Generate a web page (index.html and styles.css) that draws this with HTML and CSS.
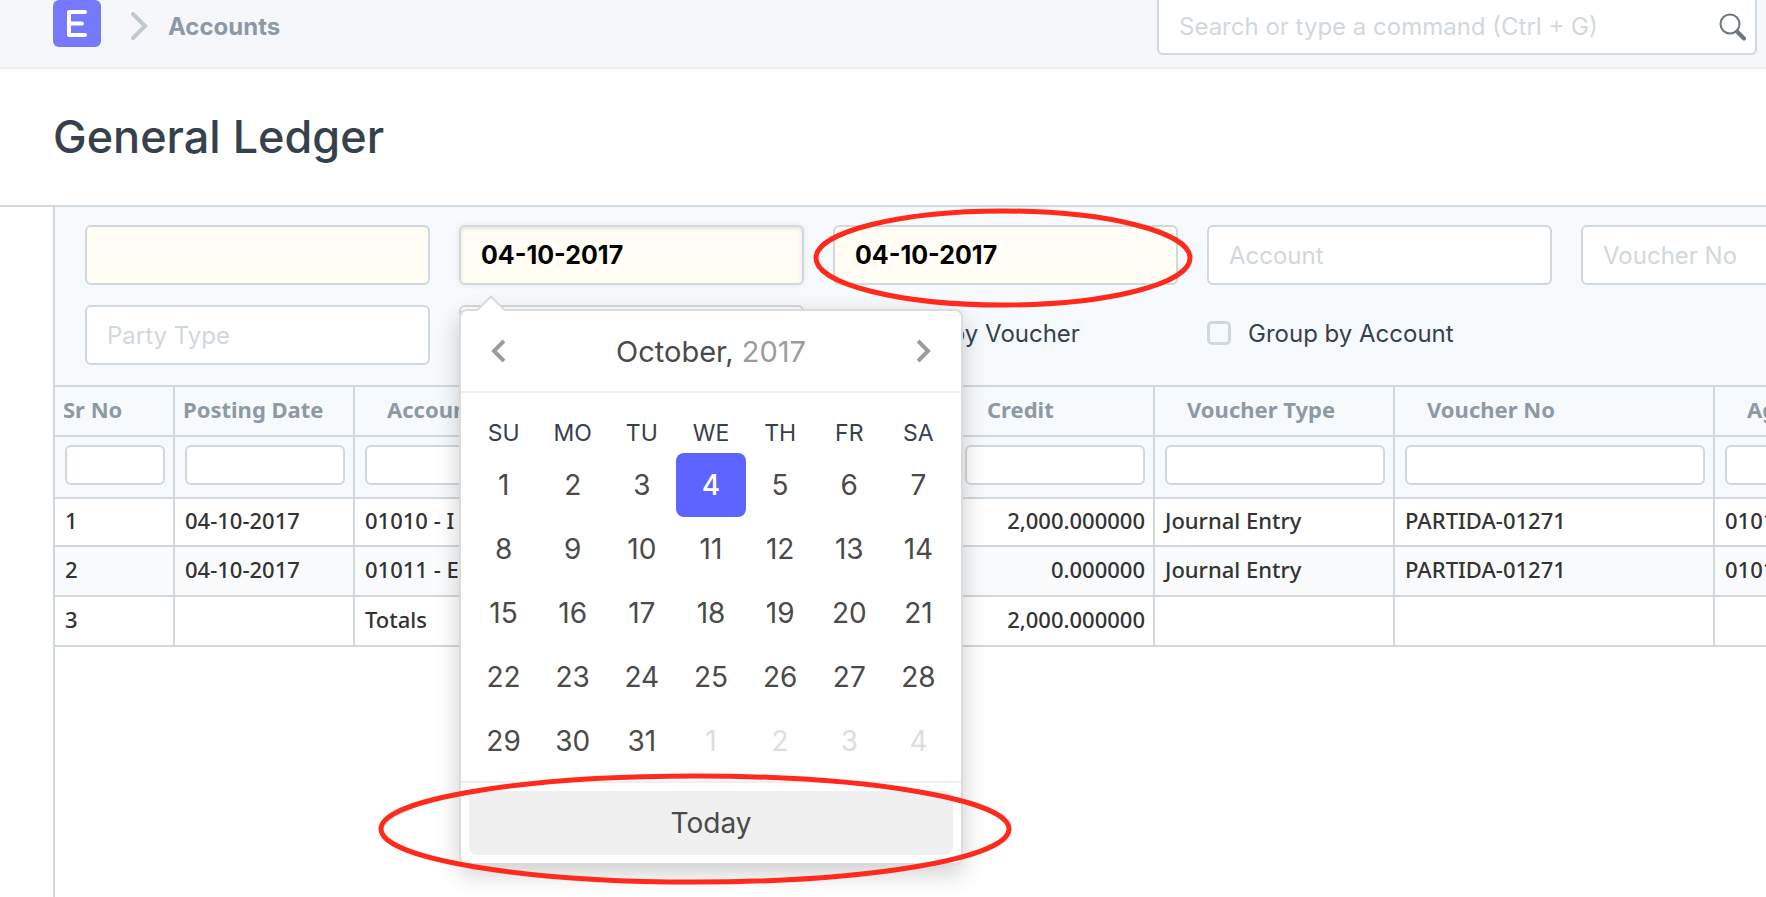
FILE: index.html
```
<!DOCTYPE html>
<html lang="en">
<head>
<meta charset="utf-8">
<title>General Ledger</title>
<link rel="stylesheet" href="styles.css">
</head>
<body>
<header class="navbar">
    <a class="logo" href="#" aria-label="Home">
        <svg width="20" height="27" viewBox="0 0 20 27"><path d="M18 2H2v23h16M2 13.500h13" fill="none" stroke="#fff" stroke-width="4" stroke-linecap="round" stroke-linejoin="round"/></svg>
    </a>
    <svg class="crumb-arrow" width="17" height="28" viewBox="0 0 17 28"><path d="M2 2l12 12L2 26" fill="none" stroke="#c0c9d0" stroke-width="4" stroke-linecap="round"/></svg>
    <a class="crumb" href="#">Accounts</a>
    <div class="search">
        <input type="text" class="search-input" aria-label="Search" placeholder="Search or type a command (Ctrl + G)">
        <svg class="search-icon" width="28" height="28" viewBox="0 0 28 28"><circle cx="11" cy="11" r="9.500" fill="none" stroke="#6c7680" stroke-width="2"/><path d="M18 18.500l7 7" stroke="#6c7680" stroke-width="4" stroke-linecap="round"/></svg>
    </div>
</header>

<div class="page-head">
    <h1>General Ledger</h1>
</div>

<main class="report">
    <div class="filters">
        <div class="filter"><input type="text" class="required" aria-label="Company"></div>
        <div class="filter">
            <input type="text" class="required active" aria-label="From Date" value="04-10-2017">
            <div class="datepicker">
                <svg class="pointer" width="30" height="17" viewBox="0 0 30 17"><path d="M1 15.500L15 1.500l14 14V17H1z" fill="#fff"/><path d="M1 15.500L15 1.500l14 14" fill="none" stroke="#dbdbdb" stroke-width="2"/></svg>
                <div class="dp-nav">
                    <button class="dp-arrow" aria-label="Previous month"><svg width="14" height="24" viewBox="0 0 14 24"><path d="M13 2L3 12l10 10" fill="none" stroke="#9c9c9c" stroke-width="4"/></svg></button>
                    <button class="dp-title">October, <span>2017</span></button>
                    <button class="dp-arrow" aria-label="Next month"><svg width="14" height="24" viewBox="0 0 14 24"><path d="M1 2l10 10L1 22" fill="none" stroke="#9c9c9c" stroke-width="4"/></svg></button>
                </div>
                <div class="dp-body">
                    <div class="dp-names">
                        <span>SU</span><span>MO</span><span>TU</span><span>WE</span><span>TH</span><span>FR</span><span>SA</span>
                    </div>
                    <div class="dp-days">
                        <button>1</button><button>2</button><button>3</button><button class="selected">4</button><button>5</button><button>6</button><button>7</button>
                        <button>8</button><button>9</button><button>10</button><button>11</button><button>12</button><button>13</button><button>14</button>
                        <button>15</button><button>16</button><button>17</button><button>18</button><button>19</button><button>20</button><button>21</button>
                        <button>22</button><button>23</button><button>24</button><button>25</button><button>26</button><button>27</button><button>28</button>
                        <button>29</button><button>30</button><button>31</button><button class="other">1</button><button class="other">2</button><button class="other">3</button><button class="other">4</button>
                    </div>
                </div>
                <div class="dp-footer">
                    <button class="today">Today</button>
                </div>
                <svg class="mark mark-today" width="634" height="112" viewBox="0 0 634 112"><ellipse cx="317" cy="56" rx="314" ry="53"/></svg>
            </div>
        </div>
        <div class="filter">
            <input type="text" class="required" aria-label="To Date" value="04-10-2017">
            <svg class="mark mark-date" width="380" height="100" viewBox="0 0 380 100"><ellipse cx="190" cy="50" rx="187" ry="47"/></svg>
        </div>
        <div class="filter"><input type="text" aria-label="Account" placeholder="Account"></div>
        <div class="filter"><input type="text" aria-label="Voucher No" placeholder="Voucher No"></div>
        <div class="filter"><input type="text" aria-label="Party Type" placeholder="Party Type"></div>
        <div class="filter"><input type="text" aria-label="Party"></div>
        <label class="check"><input type="checkbox">Group by Voucher</label>
        <label class="check"><input type="checkbox">Group by Account</label>
    </div>

    <table class="grid">
        <colgroup>
            <col class="col-sr"><col class="col-date"><col class="col-account"><col class="col-amount"><col class="col-amount"><col class="col-type"><col class="col-voucher"><col class="col-against">
        </colgroup>
        <thead>
            <tr class="titles">
                <th class="tight">Sr No</th><th class="tight">Posting Date</th><th>Account</th><th></th><th>Credit</th><th>Voucher Type</th><th>Voucher No</th><th>Against</th>
            </tr>
            <tr class="inline-filters">
                <td><input type="text" aria-label="Filter Sr No"></td>
                <td><input type="text" aria-label="Filter Posting Date"></td>
                <td><input type="text" aria-label="Filter Account"></td>
                <td><input type="text" aria-label="Filter Debit"></td>
                <td><input type="text" aria-label="Filter Credit"></td>
                <td><input type="text" aria-label="Filter Voucher Type"></td>
                <td><input type="text" aria-label="Filter Voucher No"></td>
                <td><input type="text" aria-label="Filter Against"></td>
            </tr>
        </thead>
        <tbody>
            <tr><td>1</td><td>04-10-2017</td><td>01010 - I</td><td></td><td class="number">2,000.000000</td><td>Journal Entry</td><td>PARTIDA-01271</td><td>01011</td></tr>
            <tr><td>2</td><td>04-10-2017</td><td>01011 - E</td><td></td><td class="number">0.000000</td><td>Journal Entry</td><td>PARTIDA-01271</td><td>01010</td></tr>
            <tr><td>3</td><td></td><td>Totals</td><td></td><td class="number">2,000.000000</td><td></td><td></td><td></td></tr>
        </tbody>
    </table>
</main>
</body>
</html>
```

FILE: styles.css
```
* {
  box-sizing: border-box;
}
body {
  margin: 0;
  min-height: 100vh;
  display: flex;
  flex-direction: column;
  font-family: Inter, sans-serif;
  font-size: 24px;
  color: #36414c;
  background: #fff;
}
input, button {
  font-family: inherit;
  font-size: inherit;
  color: inherit;
}
button {
  padding: 0;
  border: none;
  background: transparent;
  cursor: pointer;
}
input::placeholder {
  color: #d1d8dd;
  opacity: 1;
}

/* top bar */
.navbar {
  display: flex;
  align-items: flex-start;
  height: 69px;
  padding: 0 9px 0 53px;
  background: #f5f7fb;
  border-bottom: 2px solid #ebeff2;
}
.logo {
  display: flex;
  align-items: center;
  justify-content: center;
  width: 48px;
  height: 47px;
  border-radius: 6px;
  background: #7679fb;
}
.crumb-arrow {
  margin: 12px 20px 0 30px;
}
.crumb {
  line-height: 53px;
  font-size: 24px;
  font-weight: 700;
  color: #8d99a6;
  text-decoration: none;
}
.search {
  position: relative;
  width: 600px;
  margin-left: auto;
}
.search-input {
  display: block;
  width: 100%;
  height: 55px;
  padding: 0 60px 0 20px;
  border: 2px solid #d1d8dd;
  border-top: none;
  border-radius: 0 0 6px 6px;
  background: #fff;
}
.search-icon {
  position: absolute;
  right: 10px;
  top: 13px;
}

.page-head {
  display: flex;
  align-items: center;
  height: 138px;
  padding: 0 53px 2px;
  border-bottom: 2px solid #d1d8dd;
}
h1 {
  margin: 0;
  font-size: 45px;
  font-weight: 500;
}

/* report filters */
.report {
  flex: 1;
  margin-left: 53px;
  border-left: 2px solid #d1d8dd;
  overflow: hidden;
}
.filters {
  display: grid;
  grid-template-columns: repeat(5, 345px);
  gap: 20px 29px;
  padding: 18px 30px 20px;
  background: #f7fafc;
}
.filter {
  position: relative;
}
.filter input {
  display: block;
  width: 100%;
  height: 60px;
  padding: 0 20px;
  border: 2px solid #d1d8dd;
  border-radius: 6px;
  background: #fff;
}
.filter .required {
  background: #fffdf4;
  font-size: 25px;
  font-weight: 700;
  color: #000;
}
.filter .active {
  box-shadow: inset 0 2px 4px rgba(0, 0, 0, 0.1), 0 0 6px rgba(0, 0, 0, 0.08);
}
.check {
  display: flex;
  align-items: center;
  gap: 17px;
  height: 56px;
}
.check input {
  appearance: none;
  width: 24px;
  height: 24px;
  margin: 0;
  border: 3px solid #d1d8dd;
  border-radius: 5px;
}

/* date picker */
.datepicker {
  position: absolute;
  z-index: 2;
  top: 84px;
  left: 0;
  width: 504px;
  color: #4a4a4a;
  background: #fff;
  border: 2px solid #dbdbdb;
  border-radius: 8px;
  box-shadow: 0 8px 24px rgba(0, 0, 0, 0.2);
  font-size: 28px;
}
.pointer {
  position: absolute;
  top: -16px;
  left: 15px;
}
.dp-nav {
  display: flex;
  align-items: center;
  justify-content: space-between;
  height: 82px;
  padding: 0 7px;
  border-bottom: 2px solid #efefef;
}
.dp-arrow {
  display: flex;
  align-items: center;
  justify-content: center;
  width: 60px;
  height: 64px;
}
.dp-title {
  font-size: 29px;
}
.dp-title span {
  color: #9c9c9c;
}
.dp-body {
  padding: 16px 8px 8px;
}
.dp-names, .dp-days {
  display: grid;
  grid-template-columns: repeat(7, 1fr);
  text-align: center;
}
.dp-names {
  font-size: 23px;
  line-height: 48px;
  height: 44px;
  color: #36414c;
}
.dp-days {
  grid-auto-rows: 64px;
}
.dp-days button {
  border-radius: 8px;
}
.dp-days .selected {
  color: #fff;
  background: #5e64ff;
  font-weight: 500;
}
.dp-days .other {
  color: #dedede;
}
.dp-footer {
  padding: 8px;
  border-top: 2px solid #efefef;
}
.today {
  display: block;
  width: 100%;
  height: 64px;
  border-radius: 8px;
  background: #f0f0f0;
}

/* red marker rings */
.mark {
  position: absolute;
  z-index: 3;
  fill: none;
  stroke: #ff2a1c;
  stroke-width: 5px;
  pointer-events: none;
}
.mark-date {
  top: -17px;
  left: -20px;
}
.mark-today {
  bottom: -22px;
  left: -83px;
}

/* data grid */
.grid {
  table-layout: fixed;
  width: 1960px;
  border-collapse: separate;
  border-spacing: 0;
  font-family: "Trebuchet MS", "Noto Sans", sans-serif;
  font-size: 22px;
  font-weight: 500;
  color: #333;
}
.col-sr {
  width: 120px;
}
.col-date {
  width: 180px;
}
.col-account {
  width: 400px;
}
.col-amount {
  width: 200px;
}
.col-type {
  width: 240px;
}
.col-voucher {
  width: 320px;
}
.col-against {
  width: 300px;
}
.grid th, .grid td {
  padding: 0 8px 0 10px;
  border-right: 2px solid #d1d8dd;
  border-bottom: 2px solid #d1d8dd;
  text-align: left;
  white-space: nowrap;
}
.grid th {
  height: 52px;
  padding: 0 8px 4px 32px;
  border-top: 2px solid #d1d8dd;
  color: #8d99a6;
  background: #f7fafc;
}
.grid th.tight {
  padding-left: 8px;
}
.inline-filters td {
  height: 62px;
  padding-bottom: 4px;
  background: #f7fafc;
}
.inline-filters input {
  display: block;
  width: 100%;
  height: 40px;
  border: 2px solid #d1d8dd;
  border-radius: 6px;
  background: #fff;
}
.grid tbody td {
  height: 50px;
  padding-bottom: 4px;
}
.grid tbody tr:first-child td {
  height: 48px;
}
.grid tbody tr:nth-child(even) td {
  background: #fafbfc;
}
.grid .number {
  text-align: right;
}
```
